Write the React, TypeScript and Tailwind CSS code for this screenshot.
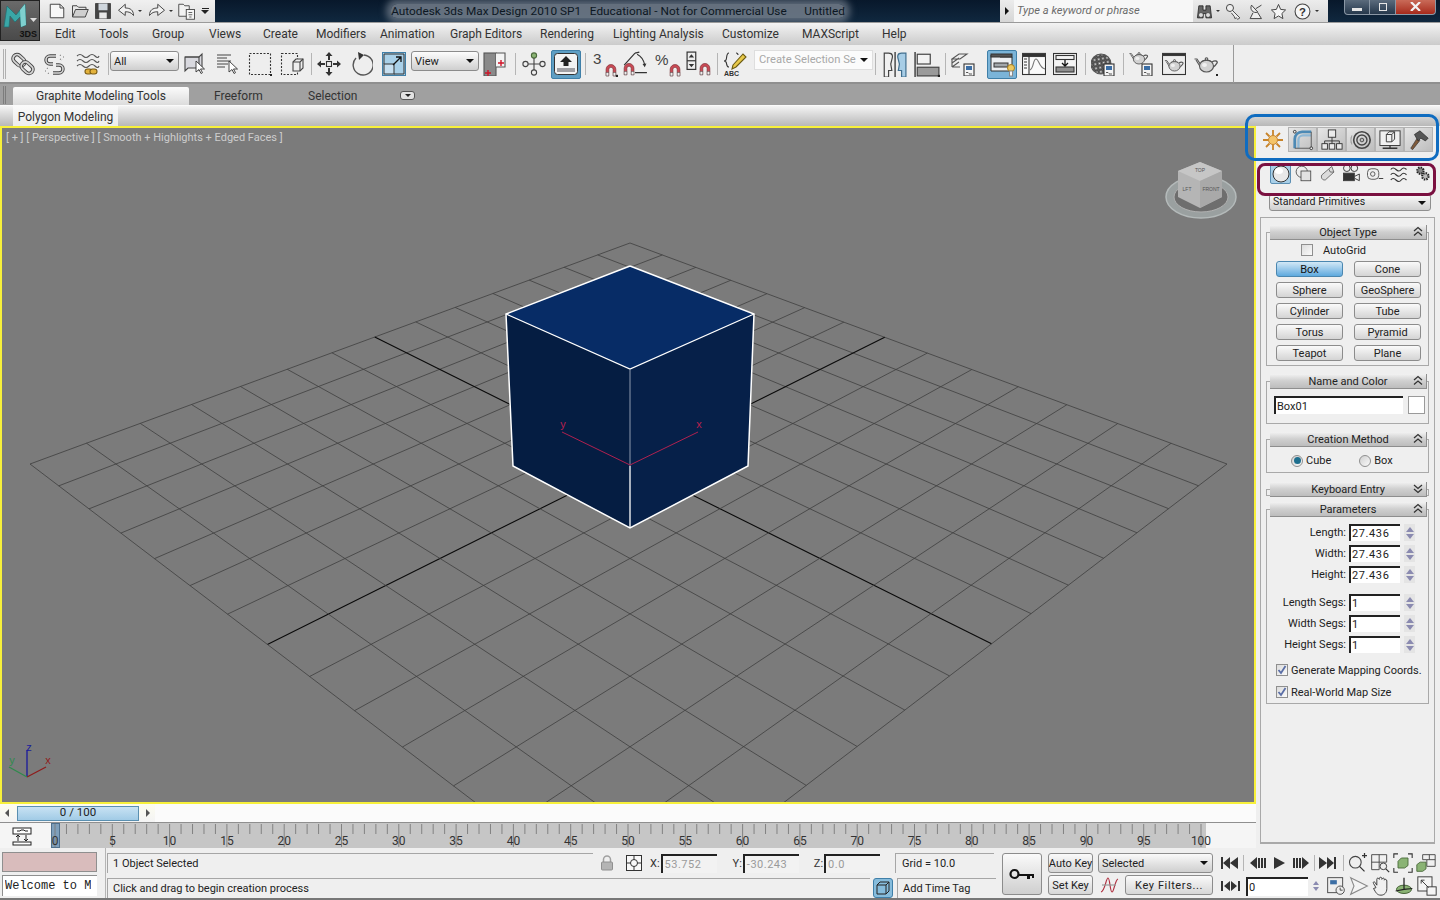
// 3ds Max Design 2010 main window with a box in the perspective viewport.
import React from 'react'

type Pt = [number, number]

// Build the projective map from the unit square onto the grid's four corners.
const makeProjection = (p0: Pt, p1: Pt, p2: Pt, p3: Pt) => {
  const dx1 = p1[0] - p2[0]
  const dx2 = p3[0] - p2[0]
  const sx = p0[0] - p1[0] + p2[0] - p3[0]
  const dy1 = p1[1] - p2[1]
  const dy2 = p3[1] - p2[1]
  const sy = p0[1] - p1[1] + p2[1] - p3[1]
  const den = dx1 * dy2 - dx2 * dy1
  const g = (sx * dy2 - dx2 * sy) / den
  const h = (dx1 * sy - sx * dy1) / den
  const a = p1[0] - p0[0] + g * p1[0]
  const b = p3[0] - p0[0] + h * p3[0]
  const d = p1[1] - p0[1] + g * p1[1]
  const e = p3[1] - p0[1] + h * p3[1]
  return (u: number, v: number): Pt => {
    const w = g * u + h * v + 1
    return [(a * u + b * v + p0[0]) / w, (d * u + e * v + p0[1]) / w]
  }
}

const project = makeProjection([630, 243], [1227, 464], [630, 920], [30, 464])
const CELLS = 14

const GridLines: React.FC = () => (
  <g>
    {Array.from({ length: CELLS + 1 }).map((_, i) => {
      const t = i / CELLS
      const [ax, ay] = project(t, 0)
      const [bx, by] = project(t, 1)
      const [cx, cy] = project(0, t)
      const [dx, dy] = project(1, t)
      const stroke = i === CELLS / 2 ? '#0a0a0a' : '#3f3f3f'
      return (
        <g key={i} stroke={stroke} strokeWidth={i === CELLS / 2 ? 1.1 : 0.8}>
          <line x1={ax} y1={ay} x2={bx} y2={by} />
          <line x1={cx} y1={cy} x2={dx} y2={dy} />
        </g>
      )
    })}
  </g>
)

// Base wrapper for the small toolbar drawings.
const Ico: React.FC<{ size?: number; children: React.ReactNode; className?: string }> = ({
  size = 24,
  children,
  className = '',
}) => (
  <svg
    width={size}
    height={size}
    viewBox="0 0 24 24"
    fill="none"
    stroke="#3c3c3c"
    strokeWidth={1.1}
    className={`shrink-0 ${className}`}
  >
    {children}
  </svg>
)

const Corner = () => <rect x="22" y="22" width="2" height="2" fill="#222" stroke="none" />
const Magnet: React.FC<{ x: number; y: number }> = ({ x, y }) => (
  <g transform={`translate(${x} ${y})`}>
    <path d="M1 11V5a4.5 4.5 0 0 1 9 0v6H7.5V5a2 2 0 0 0-4 0v6z" fill="#c94a55" stroke="#7c2a30" strokeWidth="0.6" />
    <rect x="1" y="8" width="2.5" height="3" fill="#eee" stroke="#555" strokeWidth="0.4" />
    <rect x="7.5" y="8" width="2.5" height="3" fill="#eee" stroke="#555" strokeWidth="0.4" />
  </g>
)
const Doc = () => (
  <g>
    <rect x="13" y="12" width="10" height="12" fill="#f4f4f4" stroke="#333" />
    <rect x="15" y="14" width="6" height="4" fill="#3b6ea5" stroke="none" />
    <path d="M15 20.5h2l1 1M18 22h3" stroke="#333" strokeWidth="0.8" />
  </g>
)
const Teapot: React.FC<{ dx?: number; dy?: number; s?: number }> = ({ dx = 0, dy = 0, s = 1 }) => (
  <g transform={`translate(${dx} ${dy}) scale(${s})`}>
    <path d="M7 13L3 7H0.500M7 16L2 8" stroke="#555" />
    <path d="M18 10c3-2 6-1 5 1s-3 4-5 5" stroke="#555" strokeWidth="1.400" />
    <ellipse cx="12.500" cy="14" rx="7" ry="6" fill="#d2d2d2" stroke="#555" />
    <path d="M8 9.500c2-1.500 7-1.500 9 0" fill="#e8e8e8" stroke="#555" />
    <circle cx="12.500" cy="7" r="1.300" fill="#d2d2d2" stroke="#555" />
    <ellipse cx="10.500" cy="13" rx="2.500" ry="2" fill="#f0f0f0" stroke="none" />
  </g>
)

const Link = () => (
  <Ico>
    <g transform="rotate(42 12 12)" strokeWidth="1">
      <rect x="0" y="8" width="13" height="8" rx="4" stroke="#444" strokeWidth="3.600" />
      <rect x="0" y="8" width="13" height="8" rx="4" stroke="#d6d6d6" strokeWidth="1.800" />
      <rect x="11" y="8" width="13" height="8" rx="4" stroke="#444" strokeWidth="3.600" />
      <rect x="11" y="8" width="13" height="8" rx="4" stroke="#d6d6d6" strokeWidth="1.800" />
    </g>
  </Ico>
)
const Unlink = () => (
  <Ico>
    <path d="M13 4H7a4 4 0 0 0 0 8h3" stroke="#444" strokeWidth="3.400" />
    <path d="M13 4H7a4 4 0 0 0 0 8h3" stroke="#d6d6d6" strokeWidth="1.600" />
    <path d="M10 21h6a4 4 0 0 0 0-8h-3" stroke="#444" strokeWidth="3.400" />
    <path d="M10 21h6a4 4 0 0 0 0-8h-3" stroke="#d6d6d6" strokeWidth="1.600" />
    <path d="M17 3l1 1M20 5h2M17 7l2 1M4 16l1 1M2 19h2M5 21l1 1" stroke="#777" strokeDasharray="1 1" />
  </Ico>
)
const Bind = () => (
  <Ico>
    <path d="M1 4q3-3 6 0t6 0 6 0 4 0M1 9q3-3 6 0t6 0 6 0 4 0M1 14q3-3 6 0t6 0 6 0 4 0" stroke="#555" />
    <rect x="9" y="17" width="7" height="5" rx="2.500" fill="#e3b23c" stroke="#7b5c14" />
    <rect x="14" y="17" width="7" height="5" rx="2.500" fill="#e3b23c" stroke="#7b5c14" />
  </Ico>
)
const Arrow: React.FC<{ x: number; y: number }> = ({ x, y }) => (
  <path d={`M${x} ${y}v11l3-2.500 2 4 1.500-.8-2-3.700h4z`} fill="#fff" stroke="#333" strokeWidth="0.9" />
)
const SelObj = () => (
  <Ico>
    <path d="M2 5h14l3-3v14H5l-3 3z" fill="#d9d9df" stroke="#444" />
    <path d="M2 5h14v14" stroke="#444" />
    <Arrow x={13} y={9} />
  </Ico>
)
const SelName = () => (
  <Ico>
    <path d="M1 3h14M1 6h10M1 9h14M1 12h11M1 15h8" stroke="#444" />
    <Arrow x={13} y={9} />
  </Ico>
)
const RectSel = () => (
  <Ico>
    <rect x="1.500" y="1.500" width="21" height="21" stroke="#333" strokeDasharray="2 1.500" />
    <Corner />
  </Ico>
)
const Crossing = () => (
  <Ico>
    <rect x="1.500" y="1.500" width="16" height="21" stroke="#333" strokeDasharray="2 1.500" />
    <path d="M13 10l3-3h7v9l-3 3h-7z" fill="#eee" stroke="#444" />
    <path d="M13 10h7v9M20 10l3-3" stroke="#444" />
  </Ico>
)
const Move = () => (
  <Ico>
    <rect x="9.500" y="9.500" width="5" height="5" stroke="#333" />
    <path d="M12 8V4M12 16v4M8 12H4M16 12h4" stroke="#333" strokeWidth="2" />
    <path d="M12 0l3.500 4h-7zM12 24l3.500-4h-7zM0 12l4-3.500v7zM24 12l-4-3.500v7z" fill="#333" stroke="none" />
  </Ico>
)
const Rotate = () => (
  <Ico>
    <path d="M7 6A10 10 0 1 0 15 3" stroke="#555" strokeWidth="1.400" />
    <path d="M9 0l6 3-5 5z" fill="#333" stroke="none" />
  </Ico>
)
const Scale = () => (
  <div className="flex h-[24px] w-[24px] items-center justify-center border border-[#3f7fa8] bg-[#a9d0e8]">
    <svg width="22" height="22" viewBox="0 0 22 22" fill="none" stroke="#333">
      <rect x="1" y="11" width="10" height="10" fill="#c6dff0" />
      <path d="M1 11V1h20v20H11" />
      <path d="M10 12l8-8M13 4h5v5" stroke="#111" strokeWidth="1.300" />
    </svg>
  </div>
)
const Pivot = () => (
  <Ico>
    <rect x="1" y="1" width="12" height="23" fill="#8a8a8a" stroke="#555" />
    <path d="M13 1h9v14h-9" fill="#f3f3f3" stroke="#555" />
    <path d="M18 8v6M15 11h6M5 18v6M2 21h6" stroke="#d0162a" strokeWidth="1.400" />
  </Ico>
)
const Manip = () => (
  <Ico>
    <circle cx="12" cy="3.500" r="2.600" fill="#8ab374" stroke="#4b6b3c" />
    <circle cx="3.500" cy="12" r="2.600" stroke="#444" />
    <circle cx="20.500" cy="12" r="2.600" stroke="#444" />
    <circle cx="12" cy="20.500" r="2.600" stroke="#444" />
    <path d="M12 6v12M6 12h12" stroke="#444" />
  </Ico>
)
const ShortcutBtn = () => (
  <div className="flex h-[29px] w-[30px] items-center justify-center rounded-[2px] border border-[#3f7fa8] bg-[#5f9fc4]">
    <svg width="24" height="22" viewBox="0 0 24 22">
      <rect x="0.500" y="0.500" width="23" height="21" rx="3" fill="#f3f3f3" stroke="#333" />
      <rect x="3" y="15" width="18" height="4" fill="#a0a0a4" />
      <path d="M12 3l6 6h-3.500v4h-5V9H6z" fill="#222" />
    </svg>
  </div>
)
const Snap3 = () => (
  <Ico size={26}>
    <text x="1" y="12" fontSize="14" fill="#444" stroke="none" fontFamily="Liberation Sans">3</text>
    <Magnet x={12} y={12} />
    <Corner />
  </Ico>
)
const SnapAngle = () => (
  <Ico size={26}>
    <path d="M12 2L2 13M12 2l4-1M14 3c4 2 6 5 7 10M23 20H12" stroke="#333" />
    <path d="M21 15l-2-3 3.500-.5z" fill="#333" stroke="none" />
    <Magnet x={1} y={11} />
  </Ico>
)
const SnapPct = () => (
  <Ico size={26}>
    <text x="0" y="13" fontSize="14" fill="#444" stroke="none" fontFamily="Liberation Sans">%</text>
    <Magnet x={13} y={12} />
  </Ico>
)
const SnapSpin = () => (
  <Ico size={26}>
    <rect x="1" y="1" width="8" height="16" fill="#eee" stroke="#333" />
    <path d="M5 3l2.500 3h-5zM5 15l2.500-3h-5z" fill="#333" stroke="none" />
    <path d="M1 9h8" stroke="#333" />
    <Magnet x={12} y={11} />
  </Ico>
)
const NamedSel = () => (
  <Ico>
    <path d="M6 1C3 1 4 7 3 8c-1 1-2 1-2 1s1 0 2 1 0 5 3 5M13 1c2 0 2 1 2 2" stroke="#333" />
    <path d="M10 13l10-11 3 3-10 10-4 2z" fill="#e8c94a" stroke="#6b5a12" />
    <text x="1" y="24" fontSize="7" fontWeight="700" fill="#333" stroke="none" fontFamily="Liberation Sans">ABC</text>
  </Ico>
)
const Mirror = () => (
  <Ico size={26}>
    <path d="M3 24V2h4c4 0 4 3 3 6l-1 4 1 6h-3v6z" fill="#f0f0f0" stroke="#444" />
    <path d="M13 1v24" stroke="#222" />
    <path d="M23 24V2h-4c-4 0-4 3-3 6l1 4-1 6h3v6z" fill="#a7cde6" stroke="#3f6e8e" />
  </Ico>
)
const Align = () => (
  <Ico size={26}>
    <path d="M1 1v24" stroke="#444" strokeWidth="1.400" />
    <rect x="3" y="3" width="12" height="9" fill="#f2f2f2" stroke="#444" />
    <rect x="3" y="15" width="20" height="8" fill="#9a9a9a" stroke="#444" />
    <Corner />
  </Ico>
)
const Layers = () => (
  <Ico>
    <path d="M1 7l7-5h8l-7 5zM1 11l7-5M1 15l7-5M1 7v8M1 15h8" stroke="#555" />
    <Doc />
  </Ico>
)
const GraphiteBtn = () => (
  <div className="flex h-[29px] w-[30px] items-center justify-center rounded-[2px] border border-[#3f7fa8] bg-[#7bb4d8]">
    <svg width="26" height="25" viewBox="0 0 26 25" fill="none" stroke="#333">
      <path d="M2 3h8l1 2h12v14H2z" fill="#eceff2" />
      <rect x="2" y="2" width="21" height="3" fill="#555" />
      <rect x="5" y="11" width="14" height="4" fill="#a2a7ab" />
      <circle cx="22" cy="16" r="3.500" fill="#edc860" stroke="#a47e20" />
      <rect x="20.500" y="19" width="3" height="5" fill="#f5f5f5" stroke="#888" />
    </svg>
  </div>
)
const Curve = () => (
  <Ico>
    <rect x="0.500" y="1.500" width="23" height="21" fill="#fafafa" stroke="#333" />
    <rect x="0.500" y="1.500" width="23" height="3" fill="#333" />
    <path d="M7 4v19M2 7h3M2 10h3M2 13h3M2 16h3" stroke="#333" />
    <path d="M8 18c4-2 3-11 6-11s3 9 9 10" stroke="#777" />
  </Ico>
)
const Schematic = () => (
  <Ico>
    <rect x="0.500" y="1.500" width="23" height="21" fill="#f4f4f4" stroke="#333" />
    <rect x="3" y="3.500" width="18" height="4" stroke="#333" />
    <rect x="3" y="15" width="18" height="5" fill="#8e8e8e" stroke="#333" />
    <path d="M12 8v5M9 11l3 3 3-3" stroke="#111" strokeWidth="1.300" />
  </Ico>
)
const Material = () => (
  <Ico>
    <defs>
      <pattern id="chk" width="6" height="6" patternUnits="userSpaceOnUse" patternTransform="rotate(35)">
        <rect width="6" height="6" fill="#e8e8e8" />
        <rect width="3" height="3" fill="#666" />
        <rect x="3" y="3" width="3" height="3" fill="#666" />
      </pattern>
    </defs>
    <circle cx="10" cy="12" r="10" fill="url(#chk)" stroke="#555" />
    <Doc />
  </Ico>
)
const RenderSetup = () => (
  <Ico>
    <Teapot dx={0} dy={-4} s={0.8} />
    <Doc />
  </Ico>
)
const RenderFrame = () => (
  <Ico>
    <rect x="0.500" y="1.500" width="23" height="21" fill="#eee" stroke="#333" />
    <rect x="0.500" y="1.500" width="23" height="2" fill="#333" />
    <Teapot dx={2.500} dy={3} s={0.8} />
  </Ico>
)
const Render = () => (
  <Ico>
    <Teapot />
    <Corner />
  </Ico>
)

const Sep: React.FC<{ className: string }> = ({ className }) => (
  <div className={`h-[22px] w-px shrink-0 bg-[#b5b5b5] ${className}`} />
)
const Grip = () => (
  <div className="ml-[3px] h-[30px] w-[3px] shrink-0 border-x border-[#b0b0b0]" />
)
const Caret = () => <div className="h-0 w-0 shrink-0 border-x-[4px] border-t-[4px] border-x-transparent border-t-[#111]" />

const Combo: React.FC<{ label: string; className: string }> = ({ label, className }) => (
  <div
    className={`-mt-[6px] flex h-[20px] shrink-0 items-center justify-between rounded-[3px] border border-[#8c8c8c] bg-gradient-to-b from-[#fdfdfd] to-[#cfcfcf] pl-[3px] pr-[4px] text-[11px] leading-none text-[#222] ${className}`}
  >
    <span>{label}</span>
    <Caret />
  </div>
)

// Quick access drawings, 18 pixel slots.
const QuickBar = () => (
  <div className="flex h-[22px] w-[215px] shrink-0 items-center bg-gradient-to-b from-[#f0f0f0] to-[#dedede] pl-[48px]">
    <Ico size={18} className="">
      <path d="M3 3h13l5 5v13H3z" fill="#f7f7f7" stroke="#444" strokeWidth="1.300" />
      <path d="M16 3v5h5" stroke="#444" strokeWidth="1.300" />
    </Ico>
    <Ico size={18} className="ml-[5px]">
      <path d="M2 20V5h6l2 2h10v3" fill="#e8e8e8" stroke="#444" strokeWidth="1.300" />
      <path d="M2 20l4-10h17l-4 10z" fill="#cfcfcf" stroke="#444" strokeWidth="1.300" />
    </Ico>
    <Ico size={18} className="ml-[5px]">
      <path d="M2 2h20v20H2z" fill="#444" />
      <rect x="6" y="2" width="12" height="9" fill="#cfd6dd" stroke="none" />
      <rect x="7" y="14" width="10" height="8" fill="#e8e8e8" stroke="none" />
    </Ico>
    <Ico size={18} className="ml-[5px]">
      <path d="M2 11l9-8v5c7 0 11 3 11 10-3-4-6-5-11-5v5z" fill="#f2f2f2" stroke="#444" strokeWidth="1.300" />
    </Ico>
    <div className="ml-[3px] h-0 w-0 border-x-[2px] border-t-[2px] border-x-transparent border-t-[#333]" />
    <Ico size={18} className="ml-[6px]">
      <path d="M22 11l-9-8v5C6 8 2 11 2 18c3-4 6-5 11-5v5z" fill="#f2f2f2" stroke="#444" strokeWidth="1.300" />
    </Ico>
    <div className="ml-[3px] h-0 w-0 border-x-[2px] border-t-[2px] border-x-transparent border-t-[#333]" />
    <Ico size={18} className="ml-[5px]">
      <path d="M1 3h6l2 2h6v14H1z" fill="#f2f2f2" stroke="#444" strokeWidth="1.200" />
      <rect x="11" y="10" width="11" height="13" fill="#f5f5f5" stroke="#444" strokeWidth="1.200" />
      <path d="M14 14h5M14 17h5M15 20h3" stroke="#444" />
    </Ico>
    <div className="ml-[5px] flex flex-col items-center gap-[1px]">
      <div className="h-[1.500px] w-[7px] bg-[#222]" />
      <div className="h-0 w-0 border-x-[4px] border-t-[4px] border-x-transparent border-t-[#222]" />
    </div>
  </div>
)

const TitleBar = () => (
  <div className="flex h-[23px] shrink-0 border-b border-[#9a9a9a] bg-gradient-to-b from-[#08182b] to-[#10283f]">
    <QuickBar />
    <div className="flex w-[785px] items-center justify-center overflow-hidden">
      <span className="ml-[21px] whitespace-pre rounded-[6px] bg-[#7a8591]/80 text-[11.8px] leading-[14px] text-[#0c1722] shadow-[0_0_7px_5px_rgba(122,133,145,0.7)]">
        {'Autodesk 3ds Max Design 2010 SP1   Educational - Not for Commercial Use      Untitled'}
      </span>
    </div>
    <div className="flex h-[22px] w-[328px] shrink-0 items-center bg-gradient-to-b from-[#ececec] to-[#d6d6d6] pl-[5px]">
      <div className="h-0 w-0 border-y-[4px] border-l-[4px] border-y-transparent border-l-[#111]" />
      <div className="ml-[5px] flex h-[22px] w-[179px] items-center bg-[#f7f7f7] pl-[3px] text-[11.2px] italic text-[#6a6a6a]">
        Type a keyword or phrase
      </div>
      <Ico size={17} className="ml-[3px]">
        <path d="M4 4h6v6h4V4h6l2 17h-8v-6h-4v6H2z" fill="#666" stroke="#222" />
        <circle cx="7" cy="17" r="3.500" fill="#ddd" />
        <circle cx="17" cy="17" r="3.500" fill="#ddd" />
      </Ico>
      <div className="ml-[3px] h-0 w-0 border-x-[2px] border-t-[2px] border-x-transparent border-t-[#333]" />
      <Ico size={17} className="ml-[5px]">
        <circle cx="7" cy="7" r="5" fill="#eee" stroke="#444" strokeWidth="1.400" />
        <path d="M10 10l11 11-3 2-2-2-2 1-1-3-4-5" fill="#eee" stroke="#444" strokeWidth="1.300" />
      </Ico>
      <Ico size={17} className="ml-[6px]">
        <path d="M5 3c-3 6 2 12 9 10zM11 8l8-5M7 14l-4 8h16l-5-8" stroke="#444" strokeWidth="1.400" fill="#eee" />
      </Ico>
      <Ico size={17} className="ml-[5px]">
        <path d="M12 2l3 7 7 .8-5.200 5 1.400 7.200-6.200-3.700L5.800 22l1.400-7.200-5.200-5L9 9z" fill="#f6f6f6" stroke="#444" strokeWidth="1.400" />
      </Ico>
      <Ico size={17} className="ml-[7px]">
        <circle cx="12" cy="12" r="10.500" fill="#f6f6f6" stroke="#444" strokeWidth="1.500" />
        <text x="12" y="18" textAnchor="middle" fontSize="16" fontWeight="700" fill="#333" stroke="none" fontFamily="Liberation Sans">?</text>
      </Ico>
      <div className="ml-[4px] h-0 w-0 border-x-[2px] border-t-[2px] border-x-transparent border-t-[#333]" />
    </div>
    <div className="flex h-[15px] w-[112px] shrink-0 pl-[16px]">
      <div className="flex h-[15px] w-[26px] items-center justify-center rounded-bl-[4px] border border-t-0 border-[#8a97a5] bg-gradient-to-b from-[#5b6b7c] to-[#26384c]">
        <div className="mt-[4px] h-[3px] w-[10px] bg-[#e6e6e6]" />
      </div>
      <div className="flex h-[15px] w-[25px] items-center justify-center border-b border-[#8a97a5] bg-gradient-to-b from-[#5b6b7c] to-[#26384c]">
        <div className="h-[8px] w-[8px] border border-[#e6e6e6]" />
      </div>
      <div className="flex h-[15px] w-[41px] items-center justify-center rounded-br-[4px] border border-t-0 border-[#8a97a5] bg-gradient-to-b from-[#c96a58] to-[#a6281a] pb-[1px]">
        <svg width="11" height="9" viewBox="0 0 11 9" stroke="#f3f3f3" strokeWidth="2.200">
          <path d="M1 0l9 9M10 0L1 9" />
        </svg>
      </div>
    </div>
  </div>
)

const MenuBar = () => (
  <div className="flex h-[22px] shrink-0 items-center bg-gradient-to-b from-[#f3f3f3] to-[#cbcbcb] pl-[55px] text-[12px] text-[#333]">
    <div className="w-[44px]">Edit</div>
    <div className="w-[53px]">Tools</div>
    <div className="w-[57px]">Group</div>
    <div className="w-[54px]">Views</div>
    <div className="w-[53px]">Create</div>
    <div className="w-[64px]">Modifiers</div>
    <div className="w-[70px]">Animation</div>
    <div className="w-[90px]">Graph Editors</div>
    <div className="w-[73px]">Rendering</div>
    <div className="w-[109px]">Lighting Analysis</div>
    <div className="w-[80px]">Customize</div>
    <div className="w-[80px]">MAXScript</div>
    <div>Help</div>
  </div>
)

const MainToolbar = () => (
  <div className="flex h-[39px] shrink-0 border-b-2 border-[#8f8f8f] bg-[#eeeeee]">
    <div className="flex h-[38px] w-[1234px] shrink-0 items-center border-r border-[#9a9a9a]">
      <Grip />
      <div className="ml-[5px]"><Link /></div>
      <div className="ml-[8px]"><Unlink /></div>
      <div className="ml-[9px]"><Bind /></div>
      <Sep className="ml-[8px]" />
      <Combo label="All" className="ml-[1px] w-[69px]" />
      <div className="ml-[4px]"><SelObj /></div>
      <div className="ml-[9px]"><SelName /></div>
      <div className="ml-[8px]"><RectSel /></div>
      <div className="ml-[8px]"><Crossing /></div>
      <Sep className="ml-[7px]" />
      <div className="ml-[5px]"><Move /></div>
      <div className="ml-[8px]"><Rotate /></div>
      <div className="ml-[9px]"><Scale /></div>
      <Combo label="View" className="ml-[5px] w-[68px]" />
      <div className="ml-[4px]"><Pivot /></div>
      <Sep className="ml-[8px]" />
      <div className="ml-[6px]"><Manip /></div>
      <div className="ml-[5px]"><ShortcutBtn /></div>
      <Sep className="ml-[4px]" />
      <div className="ml-[6px]"><Snap3 /></div>
      <div className="ml-[4px]"><SnapAngle /></div>
      <div className="ml-[7px]"><SnapPct /></div>
      <div className="ml-[5px]"><SnapSpin /></div>
      <Sep className="ml-[5px]" />
      <div className="ml-[5px]"><NamedSel /></div>
      <div className="-mt-[8px] ml-[7px] flex h-[20px] w-[119px] items-center justify-between border border-[#dedede] bg-[#fbfbfb] pl-[4px] pr-[4px] text-[11.2px] leading-none text-[#a8a8a8]">
        <span className="whitespace-nowrap">Create Selection Se</span>
        <Caret />
      </div>
      <Sep className="ml-[2px]" />
      <div className="ml-[5px]"><Mirror /></div>
      <div className="ml-[7px]"><Align /></div>
      <Sep className="ml-[5px]" />
      <div className="ml-[5px]"><Layers /></div>
      <div className="ml-[12px]"><GraphiteBtn /></div>
      <div className="ml-[5px]"><Curve /></div>
      <div className="ml-[7px]"><Schematic /></div>
      <Sep className="ml-[8px]" />
      <div className="ml-[5px]"><Material /></div>
      <Sep className="ml-[8px]" />
      <div className="ml-[5px]"><RenderSetup /></div>
      <div className="ml-[9px]"><RenderFrame /></div>
      <div className="ml-[8px]"><Render /></div>
    </div>
  </div>
)

const Ribbon = () => (
  <>
    <div className="flex h-[21px] shrink-0 items-end bg-[#a0a0a0] text-[12px] text-[#333]">
      <div className="mb-[1px] ml-[3px] h-[18px] w-[3px] border-x border-[#7c7c7c]" />
      <div className="ml-[7px] flex h-[18px] w-[176px] items-center justify-center rounded-t-[2px] bg-gradient-to-b from-[#fbfbfb] to-[#dcdcdc]">
        Graphite Modeling Tools
      </div>
      <div className="ml-[25px] flex h-[18px] w-[94px] items-center">Freeform</div>
      <div className="flex h-[18px] w-[92px] items-center">Selection</div>
      <div className="mb-[5px] flex h-[9px] w-[15px] items-center justify-center rounded-[3px] border border-[#555] bg-[#e2e2e2]">
        <div className="h-0 w-0 border-x-[3px] border-t-[3px] border-x-transparent border-t-[#222]" />
      </div>
    </div>
    <div className="flex h-[21px] shrink-0 border-t border-[#fafafa] bg-gradient-to-b from-[#f4f4f4] to-[#b8b8b8] pl-[13px] text-[12px] text-[#333]">
      <div className="flex h-[20px] w-[105px] items-center justify-center bg-gradient-to-b from-[#fafafa] to-[#ececec] pt-[2px]">
        Polygon Modeling
      </div>
    </div>
  </>
)

const ViewCube = () => (
  <g>
    <ellipse cx="1201" cy="197" rx="35" ry="21" fill="#9aa0a0" stroke="#b4baba" strokeWidth="1.500" />
    <ellipse cx="1201" cy="197" rx="27" ry="15" fill="#6e6e6e" stroke="#b0b0b0" />
    <path d="M1200 162l22 9v26l-22 11-22-11v-26z" fill="#b5b5b5" />
    <path d="M1178 171l22 10 22-10-22-9z" fill="#c6c6c6" />
    <path d="M1200 181v27l22-11v-26z" fill="#a9a9a9" />
    <text x="1200" y="172" textAnchor="middle" fontSize="5" fill="#555" fontFamily="Liberation Sans">TOP</text>
    <text x="1187" y="191" textAnchor="middle" fontSize="5" fill="#555" fontFamily="Liberation Sans">LFT</text>
    <text x="1211" y="191" textAnchor="middle" fontSize="5" fill="#555" fontFamily="Liberation Sans">FRONT</text>
  </g>
)

const Viewport = () => (
  <div className="relative h-[678px] shrink-0 overflow-hidden bg-[#7b7b7b]">
    <svg width="1256" height="678" viewBox="0 126 1256 678" className="absolute left-0 top-0" fontFamily="Liberation Sans">
      <GridLines />
      {/* Selected box. */}
      <polygon points="630,266 754,314 630,369 506,314" fill="#072c66" />
      <polygon points="506,314 630,369 630,528 513,466" fill="#051d42" />
      <polygon points="754,314 630,369 630,528 748,466" fill="#062049" />
      <polyline points="630,266 754,314 748,466 630,528 513,466 506,314 630,266" fill="none" stroke="#fff" strokeWidth="1.500" />
      <polyline points="506,314 630,369 754,314" fill="none" stroke="#fff" strokeWidth="1.300" />
      <line x1="630" y1="369" x2="630" y2="466" stroke="#8e9aae" />
      <line x1="630" y1="466" x2="630" y2="528" stroke="#fff" strokeWidth="1.300" />
      <path d="M562 432l68 33 68-33" fill="none" stroke="#b0204f" />
      <text x="563" y="428" fontSize="11" fill="#b8204f" textAnchor="middle">y</text>
      <text x="699" y="428" fontSize="11" fill="#b8204f" textAnchor="middle">x</text>
      {/* World axis gizmo. */}
      <path d="M27 777v-27" stroke="#1a1a9c" strokeWidth="1.300" />
      <path d="M27 777l19-10" stroke="#8e1c1c" strokeWidth="1.300" />
      <path d="M27 777l-18-10" stroke="#2f8a4c" strokeWidth="1.300" />
      <text x="29" y="751" fontSize="11" fill="#1a1a9c" textAnchor="middle">z</text>
      <text x="48" y="764" fontSize="11" fill="#8e1c1c" textAnchor="middle">x</text>
      <text x="12" y="764" fontSize="11" fill="#2f8a4c" textAnchor="middle">y</text>
      <ViewCube />
    </svg>
    <div className="absolute left-[6px] top-[4px] text-[11px] text-[#cdcdcd]">
      [ + ] [ Perspective ] [ Smooth + Highlights + Edged Faces ]
    </div>
    <div className="pointer-events-none absolute inset-0 border-2 border-[#f7f03a]" />
  </div>
)

const TimeSlider = () => (
  <div className="flex h-[18px] shrink-0 items-center bg-gradient-to-b from-[#fdfdf0] to-[#f4f4f4]">
    <div className="ml-[5px] h-0 w-0 border-y-[4px] border-r-[4px] border-y-transparent border-r-[#555]" />
    <div className="ml-[8px] flex h-[15px] w-[122px] items-center justify-center border border-[#5a8fb0] bg-gradient-to-b from-[#c8e2f3] to-[#a1cbe6] text-[11.5px] leading-none text-[#222]">
      0 / 100
    </div>
    <div className="ml-[7px] h-0 w-0 border-y-[4px] border-l-[4px] border-y-transparent border-l-[#555]" />
    <div className="ml-[5px] h-full flex-1 bg-[#fbfbfb]" />
  </div>
)

const TrackBar = () => (
  <div className="flex h-[26px] shrink-0 border-t border-[#8f8f8f] bg-[#f5f5f5]">
    <svg width="20" height="20" viewBox="0 0 20 20" fill="none" stroke="#222" className="ml-[12px] mt-[3px] shrink-0">
      <rect x="1" y="2" width="18" height="6" fill="#fff" />
      <path d="M5 5h3l1-1h3l1 1h3" />
      <path d="M6 9v6M4 11l2-2 2 2M14 9v6M12 13l2 2 2-2" />
      <rect x="1" y="16" width="18" height="3" fill="#fff" />
    </svg>
    <svg width="1165" height="25" viewBox="0 0 1165 25" className="ml-[19px] shrink-0" fontFamily="Roboto">
      <rect x="0" y="0" width="1155" height="25" fill="#c6c6c6" />
      <rect x="0.500" y="0.500" width="8" height="24" fill="#7f9fba" stroke="#50708c" />
      {Array.from({ length: 101 }).map((_, i) => {
        const x = 4 + i * 11.46
        return (
          <line key={i} x1={x} y1={1} x2={x} y2={i % 5 === 0 ? 24 : 11} stroke="#7a7a7a" strokeWidth={0.9} />
        )
      })}
      {Array.from({ length: 21 }).map((_, i) => (
        <text key={i} x={4 + i * 57.3} y={22} fontSize="12" fill="#333" textAnchor="middle">
          {i * 5}
        </text>
      ))}
    </svg>
  </div>
)

const Chevrons: React.FC<{ down?: boolean }> = ({ down }) => (
  <svg width="10" height="11" viewBox="0 0 10 11" fill="none" stroke="#333" strokeWidth="1.300" className="absolute right-[3px] top-[1px]">
    {down ? <path d="M1 2l4 3.500L9 2M1 6l4 3.500L9 6" /> : <path d="M1 5l4-3.500L9 5M1 9.500l4-3.500 4 3.500" />}
  </svg>
)

// Titled panel of the command panel, with its frame running behind the heading.
const Rollout: React.FC<{ title: string; down?: boolean; className?: string; children?: React.ReactNode }> = ({
  title,
  down,
  className = '',
  children,
}) => (
  <div className={`mx-[5px] border border-[#a9a9a9] ${className}`}>
    <div className="relative -mt-[8px] ml-[3px] mr-[1px] flex h-[15px] items-center justify-center border-b border-r border-[#8e8e8e] bg-gradient-to-b from-[#f2f2f2] via-[#cfcfcf] to-[#bdbdbd] text-[11px] leading-none text-[#222]">
      {title}
      <Chevrons down={down} />
    </div>
    {children}
  </div>
)

const ObjBtn: React.FC<{ label: string; active?: boolean }> = ({ label, active }) => (
  <div
    className={
      active
        ? 'flex h-[16px] items-center justify-center rounded-[3px] border border-[#4b87b0] bg-gradient-to-b from-[#d2e8f6] to-[#5eaade] text-[11px] leading-none text-[#111]'
        : 'flex h-[16px] items-center justify-center rounded-[3px] border border-[#8c8c8c] bg-gradient-to-b from-[#fafafa] to-[#d4d4d4] text-[11px] leading-none text-[#222]'
    }
  >
    {label}
  </div>
)

const Check: React.FC<{ checked?: boolean }> = ({ checked }) => (
  <div className="flex h-[12px] w-[12px] shrink-0 items-center justify-center border border-[#8f8f8f] bg-gradient-to-br from-[#dcdcdc] to-[#fafafa]">
    {checked && (
      <svg width="10" height="10" viewBox="0 0 10 10" fill="none" stroke="#5a6ea6" strokeWidth="1.800">
        <path d="M1.500 5l2.500 3L8.500 1" />
      </svg>
    )}
  </div>
)

const Radio: React.FC<{ on?: boolean }> = ({ on }) => (
  <div className="flex h-[12px] w-[12px] shrink-0 items-center justify-center rounded-full border border-[#8f8f8f] bg-gradient-to-br from-[#d0d0d0] to-[#fafafa]">
    {on && <div className="h-[7px] w-[7px] rounded-full bg-[#1e6f8e]" />}
  </div>
)

const Spinner = () => (
  <div className="flex h-[17px] w-[11px] shrink-0 flex-col items-center justify-center gap-[2px] bg-[#e4e4e4]">
    <div className="h-0 w-0 border-x-[4px] border-b-[5px] border-x-transparent border-b-[#8a8ab0]" />
    <div className="h-0 w-0 border-x-[4px] border-t-[5px] border-x-transparent border-t-[#8a8ab0]" />
  </div>
)

const ParamRow: React.FC<{ label: string; value: string }> = ({ label, value }) => (
  <div className="flex h-[21px] items-center text-[11px] leading-none text-[#222]">
    <div className="w-[79px] text-right">{label}</div>
    <div className="ml-[3px] flex h-[17px] w-[51px] items-center border-l-2 border-t-2 border-[#222] bg-white pl-[1px] tracking-[0.6px]">
      {value}
    </div>
    <div className="ml-[4px]"><Spinner /></div>
  </div>
)

const CommandPanel = () => (
  <div className="flex w-[184px] shrink-0 flex-col bg-[#efefef] text-[#222]">
    {/* Command panel tabs. */}
    <div className="flex h-[27px] shrink-0 items-start pl-[2px] pt-[1px]">
      <div className="flex h-[25px] w-[30px] items-center justify-center">
        <svg width="20" height="20" viewBox="0 0 20 20">
          <circle cx="10" cy="10" r="4.500" fill="#f4c46a" stroke="#c8842a" />
          <path d="M10 0v5M10 15v5M0 10h5M15 10h5M3 3l3.500 3.500M17 3l-3.500 3.500M3 17l3.500-3.500M17 17l-3.500-3.500" stroke="#c8842a" strokeWidth="1.800" />
        </svg>
      </div>
      {[
        <g key="m">
          <path d="M3 21V11A8 8 0 0 1 11 3h10" stroke="#4d8ab5" strokeWidth="3" fill="none" />
          <path d="M7 21v-9a5 5 0 0 1 5-5h9" stroke="#8fb8d5" strokeWidth="2.500" fill="none" />
          <path d="M3 21h18V3" stroke="#555" fill="none" />
          <circle cx="3" cy="3" r="1.500" fill="#eee" stroke="#333" />
          <circle cx="21" cy="21" r="1.500" fill="#eee" stroke="#333" />
        </g>,
        <g key="h" fill="#eaeaea" stroke="#333">
          <rect x="8" y="1" width="8" height="8" />
          <rect x="1" y="16" width="6" height="6" />
          <rect x="9" y="16" width="6" height="6" />
          <rect x="17" y="16" width="6" height="6" />
          <path d="M12 9v7M4 16v-3h16v3" fill="none" />
        </g>,
        <g key="mo" fill="none" stroke="#444">
          <circle cx="13" cy="12" r="9" strokeWidth="1.800" />
          <circle cx="13" cy="12" r="5.500" strokeWidth="1.500" />
          <circle cx="13" cy="12" r="2" fill="#bbb" />
          <path d="M2 7q-2 5 0 10M0 9q-1 3 0 6" stroke="#999" />
        </g>,
        <g key="d" fill="#f0f0f0" stroke="#333">
          <rect x="1" y="2" width="22" height="16" />
          <path d="M8 6l3-3h6v8l-3 3H8zM8 6h6v8M14 6l3-3" />
          <path d="M4 21h16M12 18v3" fill="none" strokeWidth="1.400" />
        </g>,
        <g key="u">
          <path d="M10 10l-7 11 2 1.500 8-10z" fill="#7f5a3a" stroke="#333" strokeWidth="0.7" />
          <path d="M7 6l6-4 9 8-3 3-5-3-3 3z" fill="#555" stroke="#222" strokeWidth="0.7" />
        </g>,
      ].map((drawing, i) => (
        <div key={i} className="flex h-[25px] w-[29px] items-center justify-center border border-[#b3b3b3] bg-gradient-to-br from-[#e6e6e6] to-[#bdbdbd]">
          <svg width="22" height="22" viewBox="0 0 24 24">{drawing}</svg>
        </div>
      ))}
    </div>

    {/* Create panel categories. */}
    <div className="flex h-[41px] shrink-0 items-center pl-[14px]">
      <div className="flex h-[21px] w-[21px] items-center justify-center rounded-[2px] border border-[#5c8fb3] bg-[#a8cfe8]">
        <svg width="18" height="18" viewBox="0 0 18 18">
          <circle cx="9" cy="9" r="8" fill="#e8e8e8" stroke="#333" />
          <ellipse cx="7" cy="6" rx="4" ry="3" fill="#fff" />
        </svg>
      </div>
      <Ico size={18} className="ml-[4px]">
        <circle cx="9" cy="9" r="7.500" fill="#eee" stroke="#444" />
        <rect x="8" y="8" width="13" height="13" fill="#e2e2e2" stroke="#444" />
      </Ico>
      <Ico size={17} className="ml-[6px]">
        <path d="M18 2l3 8-12 11c-4 1-7-3-5-7z" fill="#dcdcdc" stroke="#555" />
        <path d="M14 6l2 4 5 0" stroke="#555" />
      </Ico>
      <Ico size={20} className="ml-[5px]">
        <circle cx="7" cy="5" r="4" stroke="#333" fill="#eee" />
        <circle cx="16" cy="5" r="4" stroke="#333" fill="#eee" />
        <rect x="3" y="11" width="13" height="9" fill="#333" />
        <path d="M16 15l6-3v8l-6-3z" fill="#eee" stroke="#333" />
      </Ico>
      <Ico size={18} className="ml-[5px]">
        <rect x="2" y="5" width="15" height="14" rx="5" fill="#eee" stroke="#444" />
        <circle cx="9" cy="12" r="3" stroke="#444" />
        <path d="M17 18h6" stroke="#444" strokeWidth="1.400" />
      </Ico>
      <Ico size={18} className="ml-[6px]">
        <path d="M1 6q3-4 7 0t7 0 7 0M1 13q3-4 7 0t7 0 7 0M1 20q3-4 7 0t7 0 7 0" stroke="#333" strokeWidth="1.500" />
      </Ico>
      <Ico size={17} className="ml-[6px]">
        <circle cx="9" cy="8" r="4.500" fill="#888" stroke="#222" strokeWidth="3" strokeDasharray="2 1.500" />
        <circle cx="16" cy="16" r="4.500" fill="#bbb" stroke="#222" strokeWidth="3" strokeDasharray="2 1.500" />
      </Ico>
    </div>

    {/* Object category dropdown. */}
    <div className="ml-[13px] flex h-[17px] w-[162px] shrink-0 items-center justify-between rounded-[3px] border border-[#8f8f8f] bg-gradient-to-b from-[#fafafa] to-[#cfcfcf] pl-[3px] pr-[4px] text-[10.6px] leading-none">
      Standard Primitives
      <Caret />
    </div>

    <div className="ml-[4px] mt-[6px] flex h-[627px] w-[175px] shrink-0 flex-col border border-b-2 border-[#a9a9a9] pt-[14px]">
      <Rollout title="Object Type" className="h-[134px]">
        <div className="flex h-[17px] items-center pl-[34px] pt-[3px] text-[11px] leading-none">
          <Check />
          <span className="ml-[10px]">AutoGrid</span>
        </div>
        <div className="ml-[9px] mt-[4px] grid w-[145px] grid-cols-2 gap-x-[11px] gap-y-[5px]">
          <ObjBtn label="Box" active />
          <ObjBtn label="Cone" />
          <ObjBtn label="Sphere" />
          <ObjBtn label="GeoSphere" />
          <ObjBtn label="Cylinder" />
          <ObjBtn label="Tube" />
          <ObjBtn label="Torus" />
          <ObjBtn label="Pyramid" />
          <ObjBtn label="Teapot" />
          <ObjBtn label="Plane" />
        </div>
      </Rollout>
      <Rollout title="Name and Color" className="mt-[15px] h-[43px]">
        <div className="ml-[7px] mt-[7px] flex">
          <div className="flex h-[18px] w-[129px] items-center border-l-2 border-t-2 border-[#222] bg-white pl-[1px] text-[11px] leading-none">
            Box01
          </div>
          <div className="ml-[5px] h-[18px] w-[17px] border border-[#9a9a9a] bg-white" />
        </div>
      </Rollout>
      <Rollout title="Creation Method" className="mt-[15px] h-[34px]">
        <div className="mt-[5px] flex h-[17px] items-center pl-[24px] text-[11px] leading-none">
          <Radio on />
          <span className="ml-[3px]">Cube</span>
          <div className="ml-[28px]"><Radio /></div>
          <span className="ml-[3px]">Box</span>
        </div>
      </Rollout>
      <Rollout title="Keyboard Entry" down className="mt-[16px] h-[7px]" />
      <Rollout title="Parameters" className="mt-[13px] h-[195px]">
        <div className="pt-[5px]">
          <ParamRow label="Length:" value="27.436" />
          <ParamRow label="Width:" value="27.436" />
          <ParamRow label="Height:" value="27.436" />
          <div className="h-[7px]" />
          <ParamRow label="Length Segs:" value="1" />
          <ParamRow label="Width Segs:" value="1" />
          <ParamRow label="Height Segs:" value="1" />
          <div className="mt-[4px] flex h-[22px] items-center whitespace-nowrap pl-[9px] text-[11px] leading-none">
            <Check checked />
            <span className="ml-[3px]">Generate Mapping Coords.</span>
          </div>
          <div className="flex h-[22px] items-center whitespace-nowrap pl-[9px] text-[11px] leading-none">
            <Check checked />
            <span className="ml-[3px]">Real-World Map Size</span>
          </div>
        </div>
      </Rollout>
    </div>
  </div>
)

const StatusCell: React.FC<{ className: string; children?: React.ReactNode }> = ({ className, children }) => (
  <div className={`flex h-[20px] shrink-0 items-center border-l border-t border-[#a6a6a6] text-[11px] leading-none text-[#222] ${className}`}>
    {children}
  </div>
)

const CoordField: React.FC<{ label: string; value: string; className: string }> = ({ label, value, className }) => (
  <div className={`flex items-center text-[11px] leading-none text-[#333] ${className}`}>
    {label}
    <div className="ml-[1px] flex h-[19px] w-[56px] items-center border-l-2 border-t-2 border-[#222] bg-[#f2f2f2] pl-[2px] tracking-[0.5px] text-[#9a9a9a]">
      {value}
    </div>
  </div>
)

const PB: React.FC<{ d: string; className?: string }> = ({ d, className = '' }) => (
  <svg width="20" height="14" viewBox="0 0 20 14" className={`shrink-0 ${className}`}>
    <path d={d} fill="#333" />
  </svg>
)

const StatusBar = () => (
  <div className="flex h-[52px] shrink-0 border-b-2 border-[#777] bg-[#efefef]">
    <div className="ml-[2px] w-[95px] shrink-0 pt-[4px]">
      <div className="h-[20px] border border-[#8f8f8f] bg-[#d9bcbc]" />
      <div className="mt-[3px] flex h-[21px] items-center border-l border-t border-[#8f8f8f] bg-white pl-[2px] font-['Liberation_Mono'] text-[12px] leading-none text-[#222]">
        <span className="overflow-hidden whitespace-nowrap">Welcome to M</span>
      </div>
    </div>
    <div className="ml-[8px] flex w-[891px] shrink-0 flex-col border-l border-[#b5b5b5] pl-[1px] pt-[5px]">
      <div className="flex h-[20px] items-center">
        <StatusCell className="w-[486px] pl-[5px]">1 Object Selected</StatusCell>
        <svg width="14" height="16" viewBox="0 0 14 16" className="ml-[7px] shrink-0" fill="none">
          <path d="M3.500 7V4.500a3.500 3.500 0 0 1 7 0V7" stroke="#a0a0a0" strokeWidth="1.500" />
          <rect x="1.500" y="7" width="11" height="8" rx="1" fill="#b4b4b4" stroke="#909090" />
        </svg>
        <svg width="16" height="16" viewBox="0 0 16 16" fill="none" stroke="#333" className="ml-[12px] shrink-0">
          <rect x="0.500" y="0.500" width="15" height="15" fill="#f8f8f8" />
          <circle cx="8" cy="8" r="3.500" />
          <path d="M8 1v3.500M8 11.500V15M1 8h3.500M11.500 8H15" />
        </svg>
        <CoordField label="X:" value="53.752" className="ml-[8px]" />
        <CoordField label="Y:" value="-30.243" className="ml-[16px]" />
        <CoordField label="Z:" value="0.0" className="ml-[15px]" />
        <StatusCell className="ml-[15px] w-[99px] pl-[6px]">Grid = 10.0</StatusCell>
      </div>
      <div className="mt-[5px] flex h-[20px] items-center">
        <StatusCell className="w-[763px] pl-[5px]">Click and drag to begin creation process</StatusCell>
        <div className="ml-[3px] flex h-[20px] w-[20px] shrink-0 items-center justify-center rounded-[3px] border border-[#3f7fa8] bg-[#86bcdc]">
          <svg width="14" height="14" viewBox="0 0 14 14" fill="none" stroke="#222">
            <path d="M1 4l3-3h9v9l-3 3H1zM1 4h9v9M10 4l3-3" />
          </svg>
        </div>
        <StatusCell className="ml-[4px] w-[99px] pl-[5px]">Add Time Tag</StatusCell>
      </div>
    </div>
    <div className="ml-[6px] mt-[5px] flex h-[42px] w-[40px] shrink-0 items-center justify-center rounded-[3px] border border-[#8c8c8c] bg-gradient-to-b from-[#fafafa] to-[#cfcfcf]">
      <svg width="26" height="12" viewBox="0 0 26 12" fill="none">
        <circle cx="5.500" cy="6" r="4" stroke="#111" strokeWidth="2.200" />
        <path d="M9 6h16v4h-2V8h-2v3h-3V8H9z" fill="#111" />
      </svg>
    </div>
    <div className="ml-[6px] mt-[5px] flex w-[45px] shrink-0 flex-col gap-[2px] text-[11px] leading-none text-[#222]">
      <div className="flex h-[20px] items-center justify-center whitespace-nowrap rounded-[3px] border border-[#8c8c8c] bg-gradient-to-b from-[#fafafa] to-[#d6d6d6]">Auto Key</div>
      <div className="flex h-[20px] items-center justify-center whitespace-nowrap rounded-[3px] border border-[#8c8c8c] bg-gradient-to-b from-[#fafafa] to-[#d6d6d6]">Set Key</div>
    </div>
    <div className="ml-[5px] mt-[5px] flex w-[115px] shrink-0 flex-col gap-[2px] text-[11px] leading-none text-[#222]">
      <div className="flex h-[20px] items-center justify-between rounded-[3px] border border-[#8c8c8c] bg-gradient-to-b from-[#fafafa] to-[#cfcfcf] pl-[3px] pr-[4px]">
        Selected
        <Caret />
      </div>
      <div className="flex h-[20px] items-center">
        <svg width="20" height="18" viewBox="0 0 20 18" fill="none" stroke="#b03040" strokeWidth="1.200" className="ml-[2px] shrink-0">
          <path d="M1 16c4-1 5-14 7-14s2 14 4 14 3-12 6-13" />
          <path d="M2 9h14" stroke="#999" />
        </svg>
        <div className="ml-[5px] flex h-[20px] w-[88px] items-center justify-center rounded-[3px] border border-[#8c8c8c] bg-gradient-to-b from-[#fafafa] to-[#d6d6d6] tracking-[0.6px]">Key Filters...</div>
      </div>
    </div>
    {/* Playback and viewport navigation. */}
    <div className="ml-[7px] mt-[5px] flex w-[220px] shrink-0 flex-col">
      <div className="flex h-[20px] items-center">
        <PB d="M1 1h2v12H1zM10 1v12L3 7zM18 1v12l-8-6z" />
        <Sep className="ml-[3px] !h-[16px]" />
        <PB d="M9 1v12L2 7zM10 2h2v10h-2zM13 2h2v10h-2zM16 2h2v10h-2z" className="ml-[4px]" />
        <PB d="M6 1l11 6-11 6z" className="ml-[0px]" />
        <PB d="M2 2h2v10H2zM5 2h2v10H5zM8 2h2v10H8zM11 1l7 6-7 6z" className="ml-[3px]" />
        <Sep className="ml-[3px] !h-[16px]" />
        <PB d="M2 1l8 6-8 6zM10 1l7 6-7 6zM17 1h2v12h-2z" className="ml-[2px]" />
        <Sep className="ml-[6px] !h-[16px]" />
        <Ico size={20} className="ml-[3px]">
          <circle cx="10" cy="11" r="7" fill="#eee" stroke="#444" strokeWidth="1.300" />
          <path d="M15 16l6 6M18 3h6M21 0v6" stroke="#333" strokeWidth="1.500" />
        </Ico>
        <Ico size={20} className="ml-[3px]">
          <path d="M2 2h18v9H11v9H2z" fill="#f0f0f0" stroke="#444" />
          <path d="M11 2v9M2 11h9" stroke="#444" />
          <circle cx="16" cy="16" r="4" fill="#eee" stroke="#333" />
          <path d="M19 19l4 4" stroke="#333" strokeWidth="1.500" />
        </Ico>
        <Ico size={20} className="ml-[3px]">
          <path d="M1 6V1h5M18 1h5v5M23 18v5h-5M6 23H1v-5" stroke="#333" strokeWidth="1.300" />
          <path d="M6 10l4-4h8v9l-4 3H6z" fill="#8ab374" stroke="#4b6b3c" />
        </Ico>
        <Ico size={20} className="ml-[3px]">
          <path d="M8 2h15v14H13V8H8z" fill="#f0f0f0" stroke="#444" />
          <path d="M16 2v6M13 8h10" stroke="#444" />
          <path d="M1 14l4-3h7v8l-4 3H1z" fill="#8ab374" stroke="#4b6b3c" />
        </Ico>
      </div>
      <div className="mt-[3px] flex h-[20px] items-center">
        <PB d="M1 2h2v10H1zM10 2v10L4 7zM11 2l6 5-6 5zM18 2h2v10h-2z" />
        <div className="ml-[6px] flex h-[19px] w-[62px] shrink-0 items-center border-l-2 border-t-2 border-[#222] bg-white pl-[1px] text-[11px] leading-none text-[#222]">
          0
        </div>
        <div className="ml-[2px] flex h-[17px] w-[11px] flex-col items-center justify-center gap-[2px]">
          <div className="h-0 w-0 border-x-[3px] border-b-[4px] border-x-transparent border-b-[#8a8ab0]" />
          <div className="h-0 w-0 border-x-[3px] border-t-[4px] border-x-transparent border-t-[#8a8ab0]" />
        </div>
        <Ico size={20} className="ml-[5px]">
          <rect x="2" y="2" width="18" height="18" fill="#eee" stroke="#444" />
          <rect x="5" y="5" width="8" height="5" fill="#3b6ea5" stroke="none" />
          <circle cx="17" cy="17" r="5" fill="#eee" stroke="#444" />
          <path d="M17 14v3h3" stroke="#444" />
        </Ico>
        <Ico size={20} className="ml-[3px]">
          <path d="M2 2l20 10L2 22l4-10z" stroke="#888" strokeWidth="1.300" fill="#f4f4f4" />
        </Ico>
        <Ico size={20} className="ml-[2px]">
          <path d="M6 14L3 9c-1-2 1-3 2-1l2 3V4c0-2 2-2 3 0v-1c0-2 3-2 3 0v1c1-2 3-2 3 0v1c1-2 3-1 3 1v9c0 5-3 8-7 8-5 0-6-3-9-8z" fill="#f0f0f0" stroke="#333" />
        </Ico>
        <Ico size={20} className="ml-[3px]">
          <ellipse cx="12" cy="16" rx="9" ry="5" fill="#8ab374" stroke="#3b5a2c" />
          <path d="M12 16V2M12 16l10-1M2 18l10-2" stroke="#222" strokeWidth="1.500" />
        </Ico>
        <Ico size={20} className="ml-[3px]">
          <rect x="1" y="1" width="17" height="17" fill="#f4f4f4" stroke="#333" />
          <rect x="12" y="13" width="11" height="10" fill="#f4f4f4" stroke="#333" />
          <path d="M5 5l9 9M5 9V5h4" stroke="#333" />
        </Ico>
      </div>
    </div>
  </div>
)

const App: React.FC = () => (
  <div className="relative flex h-[900px] w-[1440px] flex-col overflow-hidden bg-[#efefef] font-['Roboto',sans-serif]">
    <TitleBar />
    <MenuBar />
    <MainToolbar />
    <Ribbon />
    <div className="flex h-[722px] shrink-0">
      <div className="flex w-[1256px] shrink-0 flex-col">
        <Viewport />
        <TimeSlider />
        <TrackBar />
      </div>
      <CommandPanel />
    </div>
    <StatusBar />

    {/* Application button sits across the title and menu bars. */}
    <div className="absolute left-0 top-0 h-[41px] w-[40px] overflow-hidden border border-[#222] bg-gradient-to-b from-[#6a6a6a] to-[#4a4a4a]">
      <svg width="38" height="39" viewBox="0 0 38 39">
        <path d="M3 26L6 5l9 9 9-11 1 21-5 2-1-10-5 5-5-6-1 11z" fill="#3aa7a7" stroke="#1f6f72" strokeWidth="0.700" />
        <path d="M25 24L24 3l-5 6 1 17z" fill="#7fd0cf" />
        <path d="M29 17h7l-3.500 4z" fill="#ddd" />
      </svg>
      <span className="absolute bottom-[1px] right-[2px] font-['Liberation_Sans'] text-[9px] font-bold leading-none text-[#111]">3DS</span>
    </div>

    {/* Annotation outlines around the command panel tabs. */}
    <div className="absolute left-[1245px] top-[114px] h-[47px] w-[194px] rounded-[10px] border-[3px] border-[#0f6cc0]" />
    <div className="absolute left-[1257px] top-[163px] h-[33px] w-[179px] rounded-[8px] border-[3px] border-[#7a1040]" />
  </div>
)

export default App
